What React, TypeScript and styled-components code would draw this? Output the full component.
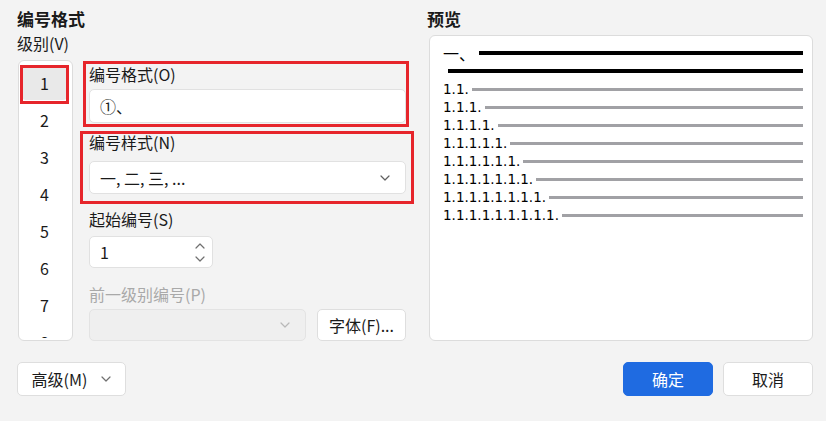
import React from 'react';
import styled, { createGlobalStyle } from 'styled-components';

const GlobalStyle = createGlobalStyle`
  html, body {
    margin: 0;
    padding: 0;
    background: #f3f3f3;
  }
  body {
    font-family: 'Noto Sans CJK SC', 'Noto Sans', sans-serif;
    color: #1a1a1a;
  }
  * { box-sizing: border-box; }
`;

const Page = styled.div`
  width: 826px;
  height: 421px;
  padding: 8px 13px 0 17px;
  overflow: hidden;
`;

const Main = styled.div`
  display: flex;
  gap: 18px;
`;

const LeftColumn = styled.div`
  width: 392px;
  display: flex;
  flex-direction: column;
`;

const RightColumn = styled.div`
  flex: 1;
  display: flex;
  flex-direction: column;
`;

const SectionTitle = styled.div`
  font-size: 17px;
  font-weight: 700;
  line-height: 22px;
  height: 22px;
`;

const Label = styled.div<{ disabled?: boolean }>`
  font-size: 16px;
  line-height: 22px;
  height: 22px;
  white-space: nowrap;
  color: ${({ disabled }) => (disabled ? '#a9a9a9' : '#1a1a1a')};
`;

const LevelLabel = styled(Label)`
  margin: 2px 0 6px;
`;

const Body = styled.div`
  display: flex;
  align-items: flex-start;
`;

const LevelList = styled.div`
  width: 55px;
  height: 281px;
  margin-left: 1px;
  background: #fff;
  border: 1px solid #dcdcdc;
  border-radius: 6px;
  padding-top: 4px;
`;

// scroll viewport of the level list; the 8th level peeks in at the bottom
const LevelViewport = styled.div`
  height: 273px;
  padding: 1px 5px 0 3px;
  overflow: hidden;
`;

const LevelItem = styled.div<{ selected?: boolean }>`
  position: relative;
  height: 34px;
  margin-bottom: 3px;
  display: flex;
  align-items: center;
  justify-content: center;
  font-size: 16px;
  border-radius: 4px;
  background: ${({ selected }) => (selected ? '#e9e9e9' : 'transparent')};
`;

const Fields = styled.div`
  width: 317px;
  margin-left: 16px;
  display: flex;
  flex-direction: column;
`;

const Field = styled.div<{ top: number; gap: number }>`
  position: relative;
  margin-top: ${({ top }) => top}px;
  display: flex;
  flex-direction: column;
  gap: ${({ gap }) => gap}px;
`;

// red annotation frame drawn over a part of the dialog
const Marker = styled.div<{ t: number; r: number; b: number; l: number }>`
  position: absolute;
  top: ${({ t }) => t}px;
  right: ${({ r }) => r}px;
  bottom: ${({ b }) => b}px;
  left: ${({ l }) => l}px;
  border: 3px solid #e6252b;
  pointer-events: none;
`;

const Input = styled.div`
  height: 34px;
  background: #fff;
  border: 1px solid #e1e1e1;
  border-radius: 5px;
  display: flex;
  align-items: center;
  padding: 0 10px;
  font-size: 16px;
`;

const Select = styled.div<{ disabled?: boolean; width?: number }>`
  height: ${({ disabled }) => (disabled ? 32 : 33)}px;
  width: ${({ width }) => (width ? `${width}px` : '100%')};
  background: ${({ disabled }) => (disabled ? '#efefef' : '#fff')};
  border: 1px solid ${({ disabled }) => (disabled ? '#e3e3e3' : '#e1e1e1')};
  border-radius: 5px;
  display: flex;
  align-items: center;
  justify-content: space-between;
  padding: 0 15px 0 10px;
  font-size: 16px;
`;

const Spin = styled.div`
  width: 124px;
  height: 32px;
  background: #fff;
  border: 1px solid #e1e1e1;
  border-radius: 5px;
  display: flex;
  align-items: center;
  justify-content: space-between;
  padding: 0 7px 0 10px;
  font-size: 16px;
`;

const SpinArrows = styled.div`
  display: flex;
  flex-direction: column;
  gap: 7px;
`;

const InlineRow = styled.div`
  display: flex;
  gap: 11px;
`;

const Button = styled.div<{ primary?: boolean; width: number; height?: number }>`
  width: ${({ width }) => width}px;
  height: ${({ height }) => height ?? 34}px;
  border-radius: 5px;
  display: flex;
  align-items: center;
  justify-content: center;
  gap: 14px;
  font-size: 16px;
  background: ${({ primary }) => (primary ? '#1f6be1' : '#fff')};
  color: ${({ primary }) => (primary ? '#fff' : '#1a1a1a')};
  border: 1px solid ${({ primary }) => (primary ? '#1f6be1' : '#dedede')};
`;

const PreviewBox = styled.div`
  margin: 5px 0 0 2px;
  height: 306px;
  background: #fff;
  border: 1px solid #dcdcdc;
  border-radius: 6px;
  padding: 8px 9px 0 13px;
`;

const PreviewRow = styled.div<{ indent?: number }>`
  height: 18px;
  display: flex;
  align-items: center;
  padding-left: ${({ indent }) => indent ?? 0}px;
  font-family: 'DejaVu Sans', sans-serif;
  font-size: 13.5px;
  color: #000;
  white-space: nowrap;
`;

const HeadingNumber = styled.span`
  font-family: 'Noto Sans CJK SC', sans-serif;
  font-size: 16px;
  line-height: 18px;
  margin-right: 4px;
`;

const Bar = styled.div<{ dark?: boolean }>`
  flex: 1;
  height: ${({ dark }) => (dark ? 4 : 3)}px;
  margin-left: ${({ dark }) => (dark ? 0 : 3)}px;
  background: ${({ dark }) => (dark ? '#000' : '#a1a1a5')};
`;

const Footer = styled.div`
  margin-top: 21px;
  display: flex;
  align-items: center;
`;

const FooterActions = styled.div`
  margin-left: auto;
  display: flex;
  gap: 10px;
`;

const Chevron: React.FC<{ up?: boolean; color?: string }> = ({ up, color = '#606060' }) => (
  <svg width="10" height="6" viewBox="0 0 10 6" fill="none">
    <path
      d={up ? 'M1 5L5 1L9 5' : 'M1 1L5 5L9 1'}
      stroke={color}
      strokeWidth="1.2"
      strokeLinecap="round"
      strokeLinejoin="round"
    />
  </svg>
);

const levels = [1, 2, 3, 4, 5, 6, 7, 8];

export default function App() {
  const subLevels = [2, 3, 4, 5, 6, 7, 8, 9];

  return (
    <>
      <GlobalStyle />
      <Page>
        <Main>
          <LeftColumn>
            <SectionTitle>编号格式</SectionTitle>
            <LevelLabel>级别(V)</LevelLabel>
            <Body>
              <LevelList>
                <LevelViewport>
                  {levels.map((n) => (
                    <LevelItem key={n} selected={n === 1}>
                      {n}
                      {n === 1 && <Marker t={-1} r={-2} b={-4} l={-2} />}
                    </LevelItem>
                  ))}
                </LevelViewport>
              </LevelList>
              <Fields>
                <Field top={3} gap={4}>
                  <Marker t={-2} r={-3} b={-4} l={-6} />
                  <Label>编号格式(O)</Label>
                  <Input>①、</Input>
                </Field>
                <Field top={8} gap={8}>
                  <Marker t={0} r={-8} b={-10} l={-9} />
                  <Label>编号样式(N)</Label>
                  <Select>
                    <span>一, 二, 三, ...</span>
                    <Chevron />
                  </Select>
                </Field>
                <Field top={14} gap={6}>
                  <Label>起始编号(S)</Label>
                  <Spin>
                    <span>1</span>
                    <SpinArrows>
                      <Chevron up color="#707070" />
                      <Chevron color="#707070" />
                    </SpinArrows>
                  </Spin>
                </Field>
                <Field top={15} gap={4}>
                  <Label disabled>前一级别编号(P)</Label>
                  <InlineRow>
                    <Select disabled width={217}>
                      <span />
                      <Chevron color="#b8b8b8" />
                    </Select>
                    <Button width={89} height={32}>字体(F)...</Button>
                  </InlineRow>
                </Field>
              </Fields>
            </Body>
          </LeftColumn>

          <RightColumn>
            <SectionTitle>预览</SectionTitle>
            <PreviewBox>
              <PreviewRow>
                <HeadingNumber>一、</HeadingNumber>
                <Bar dark />
              </PreviewRow>
              <PreviewRow indent={5}>
                <Bar dark />
              </PreviewRow>
              {subLevels.map((depth) => (
                <PreviewRow key={depth}>
                  <span>{Array(depth).fill('1.').join('')}</span>
                  <Bar />
                </PreviewRow>
              ))}
            </PreviewBox>
          </RightColumn>
        </Main>

        <Footer>
          <Button width={109}>
            <span>高级(M)</span>
            <Chevron color="#707070" />
          </Button>
          <FooterActions>
            <Button primary width={90}>确定</Button>
            <Button width={90}>取消</Button>
          </FooterActions>
        </Footer>
      </Page>
    </>
  );
}
